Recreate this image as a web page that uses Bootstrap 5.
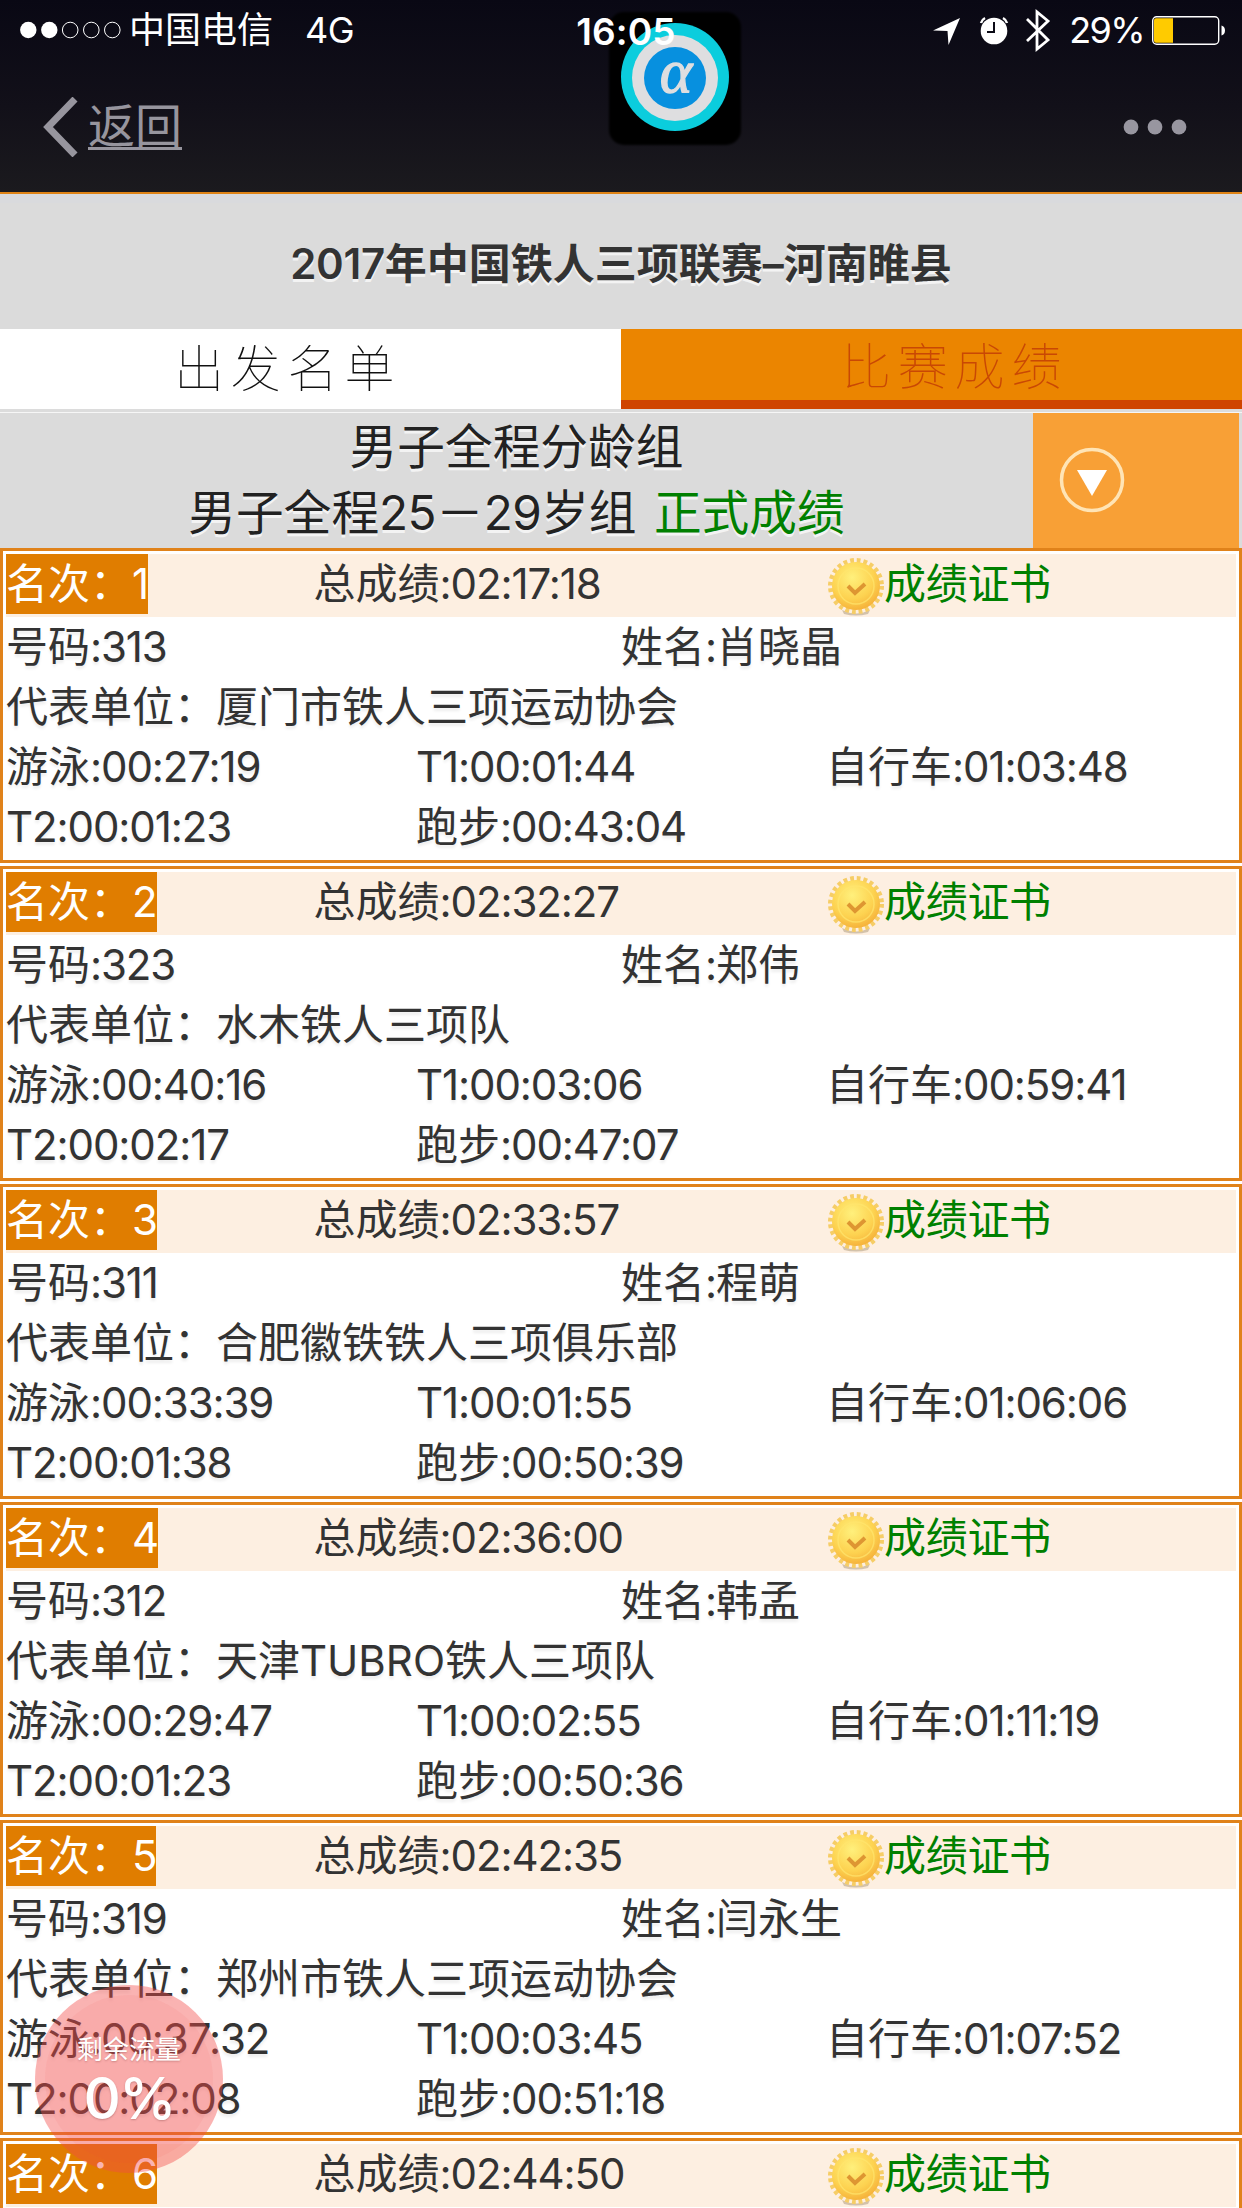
<!DOCTYPE html>
<html lang="zh-CN">
<head>
<meta charset="utf-8">
<title>2017年中国铁人三项联赛–河南睢县</title>
<link href="https://cdn.jsdelivr.net/npm/bootstrap@5.3.0/dist/css/bootstrap.min.css" rel="stylesheet">
<style>
  body { font-family: Inter, "Noto Sans CJK SC", sans-serif; font-size: 42px; line-height: 60px; color: #333; background: #fff; width: 1242px; height: 2208px; overflow: hidden; position: relative; }
  .topbar { height: 194px; background: linear-gradient(#090814, #121019 55%, #1b1a1e); border-bottom: 2px solid #df8315; }
  .statusbar { height: 60px; padding: 0 17px 0 20px; font-size: 36px; line-height: 64px; z-index: 2; }
  .side { width: 0; }
  .clock { font-weight: 600; font-size: 37px; letter-spacing: .1px; margin-left: 7px; }
  .network { font-size: 36px; margin-left: 32px; letter-spacing: -.6px; }
  .charge { font-size: 36px; letter-spacing: -1.6px; margin-right: 81px; }
  .app-logo { left: 605px; top: 6px; z-index: 1; }
  .navline { height: 133px; padding: 0 55px 0 43px; color: #97959e; }
  .back { font-size: 47px; line-height: 56px; }
  .back span { border-bottom: 3px solid #97959e; line-height: 43px; height: 46px; margin-left: 10px; }
  .event-title { height: 135px; background: linear-gradient(#d9dadd 9px, #dbdbdb 9px); font-weight: 600; font-size: 42px; line-height: 139px; text-shadow: 0 3px 0 #f3f3f3; }
  .year { letter-spacing: -.3px; }
  .tabs { height: 80px; font-size: 50px; letter-spacing: 6.8px; font-weight: 100; line-height: 81px; }
  .tab-a { color: #111; padding-left: 174px; }
  .tab-b { background: #eb8500; color: #c94804; border-bottom: 9px solid #cf4400; padding-left: 220px; line-height: 76px; }
  .group-bar { height: 139px; background: #dbdbdb; border-top: 3px solid #dcdcdc; box-shadow: inset 0 1px #f6f6f6; font-size: 47.7px; line-height: 66px; color: #222; text-shadow: 0 3px 0 #f3f3f3; }
  .group-name { width: 1033px; padding-top: 2px; }
  .group-menu { width: 206px; background: #f8a036; margin-top: 1px; padding-left: 25px; }
  .ok { color: #008000; }
  .result { border: 3px solid #e0821a; padding: 3px; margin-bottom: 3px; height: 315px; white-space: nowrap; text-shadow: 0 3px 3px #eee; line-height: 60px; }
  .result .row, .result .unit { height: 60px; }
  .result .result-head { background: #fdefe1; height: 63px; text-shadow: none; }
  .rank { background: #e07d00; color: #fff; height: 60px; display: inline-block; vertical-align: top; }
  .num { letter-spacing: -1.1px; }
  .group-bar .num { letter-spacing: -.6px; }
  .medal { margin: 2px 0 0 2px; }
  .cert { letter-spacing: -.3px; }
  .flow { left: 35px; top: 1985px; width: 188px; height: 188px; color: #fff; z-index: 3; line-height: 1; text-shadow: 0 1px 2px rgba(120,60,60,.35); }
  .flow svg { position: absolute; left: 0; top: 0; }
  .flow-label { font-size: 26px; padding-top: 52px; position: relative; }
  .flow-value { font-size: 58px; position: relative; margin-top: 6px; letter-spacing: -2px; font-weight: 500; }
</style>
<script src="https://cdn.jsdelivr.net/npm/bootstrap@5.3.0/dist/js/bootstrap.bundle.min.js"></script>
</head>
<body>
<header class="topbar position-relative">
  <div class="statusbar d-flex text-white position-relative">
    <div class="side flex-grow-1 d-flex align-items-center text-nowrap">
      <svg width="101" height="18" viewBox="0 0 101 18"><g fill="#fff"><circle cx="8.3" cy="9" r="8.2"/><circle cx="29.3" cy="9" r="8.2"/></g><g fill="none" stroke="#fff" stroke-width="1"><circle cx="50.2" cy="9" r="7.8"/><circle cx="71.3" cy="9" r="7.8"/><circle cx="92.3" cy="9" r="7.8"/></g></svg>
      <span class="ms-2">中国电信</span><span class="network">4G</span>
    </div>
    <div class="clock">16:05</div>
    <div class="side flex-grow-1 d-flex align-items-center justify-content-end text-nowrap">
      <svg width="292" height="46" viewBox="933 7 292 46" class="position-absolute"><path fill="#fff" d="M933 30.5 960 18 948.5 45 947.500 31z"/>
        <circle cx="994" cy="31" r="13.3" fill="#fff"/><path d="M994 22v10h-7" fill="none" stroke="#0b0a16" stroke-width="2"/><path d="M981 23a8 8 0 0 1 4-5M1007 23a8 8 0 0 0-4-5" fill="none" stroke="#fff" stroke-width="2.500"/>
        <path d="m1027 19 21 21-11 9V12l11 9-21 20" fill="none" stroke="#fff" stroke-width="2.800"/>
        <rect x="1152.700" y="16.700" width="66" height="27.500" rx="4" fill="none" stroke="#fff" stroke-width="1.400"/><path d="M1156 18.300h17v24.500h-17q-2 0-2-2v-20.500q0-2 2-2z" fill="#ffcb00"/><path d="M1221.500 25.500q3.500 1 3.500 5t-3.500 5z" fill="#fff"/></svg>
      <span class="charge">29%</span>
    </div>
  </div>
  <svg class="app-logo position-absolute" width="140" height="144" viewBox="605 6 140 144"><defs><filter id="soft" x="-10%" y="-10%" width="120%" height="120%"><feGaussianBlur stdDeviation="1.2"/></filter></defs><rect x="609" y="12" width="132" height="133" rx="15" fill="#020202" filter="url(#soft)"/><circle cx="675" cy="77" r="54" fill="#0bcddd"/><circle cx="675" cy="78" r="43" fill="#dedee0"/><circle cx="675" cy="78" r="31" fill="#0790df"/><text x="676" y="92" text-anchor="middle" font-family="Liberation Serif, serif" font-style="italic" font-size="62" fill="#dedee0" stroke="#dedee0" stroke-width="1.300">α</text></svg>
  <nav class="navline d-flex justify-content-between align-items-center">
    <div class="back d-flex align-items-center"><svg width="35" height="60" viewBox="0 0 35 60"><path d="M32 2 5 30 32 58" fill="none" stroke="#97959e" stroke-width="7"/></svg><span>返回</span></div>
    <svg width="64" height="16" viewBox="0 0 64 16" fill="#9896a0"><circle cx="8" cy="8" r="7.400"/><circle cx="32" cy="8" r="7.400"/><circle cx="56" cy="8" r="7.400"/></svg>
  </nav>
</header>
<main>
  <h1 class="event-title text-center m-0"><span class="year">2017</span>年中国铁人三项联赛–河南睢县</h1>
  <div class="tabs d-flex"><div class="tab-a w-50">出发名单</div><div class="tab-b w-50">比赛成绩</div></div>
  <div class="group-bar d-flex">
    <div class="group-name text-center">男子全程分龄组<br>男子全程<span class="num">25</span>－<span class="num">29</span>岁组&nbsp;<span class="ok ms-1">正式成绩</span></div>
    <div class="group-menu d-flex align-items-center"><svg width="68" height="68" viewBox="0 0 68 68"><circle cx="34" cy="33" r="30.500" fill="none" stroke="#ffe4b5" stroke-width="3.500"/><path d="M19 23h30L34 49z" fill="#fff"/></svg></div>
  </div>
  <section id="results"></section>
</main>
<svg width="0" height="0" class="position-absolute"><defs>
  <radialGradient id="gold" cx=".42" cy=".32" r=".75"><stop offset="0" stop-color="#fff07c"/><stop offset=".6" stop-color="#fdd250"/><stop offset="1" stop-color="#f4aa35"/></radialGradient>
  <symbol id="seal" viewBox="0 0 56 60"><path d="M14 54q14 7 28 0l-2 4q-12 3-24 0z" fill="#b7a487" opacity=".6"/><circle cx="28" cy="30" r="25.500" fill="none" stroke="#f6cd66" stroke-width="5" stroke-dasharray="3.800 2.876"/><circle cx="28" cy="30" r="24" fill="url(#gold)"/><circle cx="28" cy="30" r="18" fill="none" stroke="#ffe66e" stroke-width="1.500" opacity=".7"/><path d="m20 30 7 7 10-9" fill="none" stroke="#de9632" stroke-width="4"/></symbol>
</defs></svg>
<div class="flow position-absolute text-center">
  <svg width="188" height="188"><circle cx="94" cy="94" r="94" fill="#f44b48" fill-opacity=".42"/><circle cx="94" cy="94" r="84" fill="#f44b48" fill-opacity=".07"/></svg>
  <div class="flow-label">剩余流量</div><div class="flow-value">0%</div>
</div>
<script>
  const rows = [
    ['02:17:18','313','肖晓晶','厦门市铁人三项运动协会','00:27:19','00:01:44','01:03:48','00:01:23','00:43:04'],
    ['02:32:27','323','郑伟','水木铁人三项队','00:40:16','00:03:06','00:59:41','00:02:17','00:47:07'],
    ['02:33:57','311','程萌','合肥徽铁铁人三项俱乐部','00:33:39','00:01:55','01:06:06','00:01:38','00:50:39'],
    ['02:36:00','312','韩孟','天津TUBRO铁人三项队','00:29:47','00:02:55','01:11:19','00:01:23','00:50:36'],
    ['02:42:35','319','闫永生','郑州市铁人三项运动协会','00:37:32','00:03:45','01:07:52','00:02:08','00:51:18'],
    ['02:44:50','','','','','','','','']
  ];
  // Times and numbers are set slightly tighter than the Chinese text
  const t = s => s.replace(/T?[0-9:]+/g, m => `<span class="num">${m}</span>`);
  document.getElementById('results').innerHTML = rows.map((r, i) => `
    <article class="result">
      <div class="result-head row g-0">
        <div class="col-3"><span class="rank">${t('名次：' + (i + 1))}</span></div>
        <div class="col-5">${t('总成绩:' + r[0])}</div>
        <div class="col-4 d-flex ok cert"><svg class="medal" width="56" height="60"><use href="#seal"/></svg>成绩证书</div>
      </div>
      ${r[1] ? `<div class="row g-0"><div class="col-6">${t('号码:' + r[1])}</div><div class="col-6">${t('姓名:')}${r[2]}</div></div>
      <div class="unit">代表单位：${r[3]}</div>
      <div class="row g-0"><div class="col-4">${t('游泳:' + r[4])}</div><div class="col-4">${t('T1:' + r[5])}</div><div class="col-4">${t('自行车:' + r[6])}</div></div>
      <div class="row g-0"><div class="col-4">${t('T2:' + r[7])}</div><div class="col-4">${t('跑步:' + r[8])}</div></div>` : ''}
    </article>`).join('');
</script>
</body>
</html>
